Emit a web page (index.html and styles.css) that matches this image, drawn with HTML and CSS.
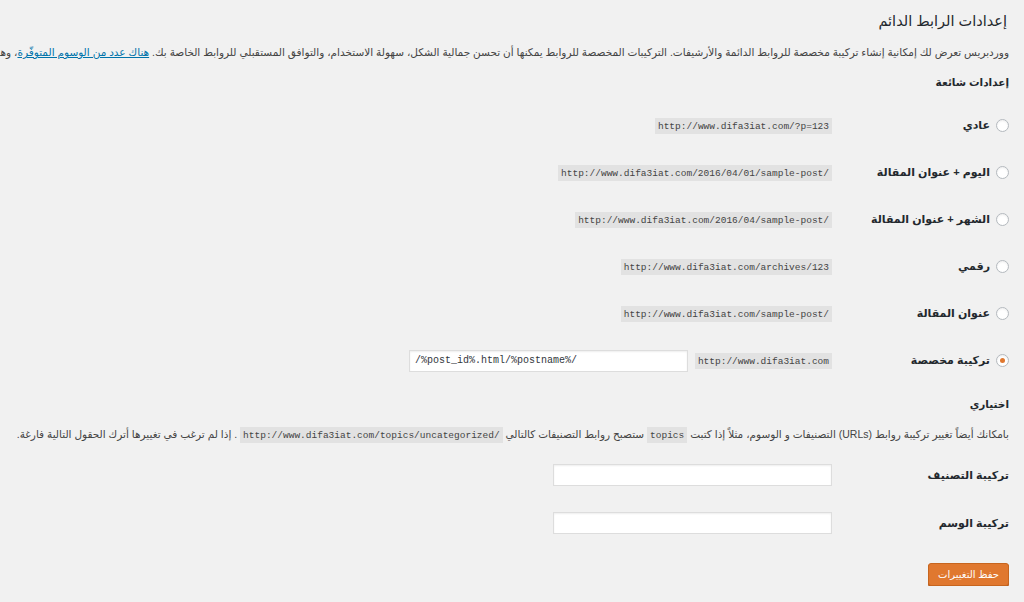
FILE: index.html
```html
<!DOCTYPE html>
<html lang="ar" dir="rtl">
<head>
    <meta charset="UTF-8">
    <title>إعدادات الرابط الدائم</title>
    <link rel="stylesheet" href="styles.css">
</head>
<body>
    <div class="wrap">
        <h1>إعدادات الرابط الدائم</h1>
        <p class="intro">ووردبريس تعرض لك إمكانية إنشاء تركيبة مخصصة للروابط الدائمة والأرشيفات. التركيبات المخصصة للروابط يمكنها أن تحسن جمالية الشكل، سهولة الاستخدام، والتوافق المستقبلي للروابط الخاصة بك. <a href="#">هناك عدد من الوسوم المتوفّرة</a>، وهنا بعض الأمثلة للبدء.</p>

        <h2 class="title">إعدادات شائعة</h2>
        <div class="options">
            <div class="row">
                <label class="choice"><span class="radio"></span>عادي</label>
                <code>http://www.difa3iat.com/?p=123</code>
            </div>
            <div class="row">
                <label class="choice"><span class="radio"></span>اليوم + عنوان المقالة</label>
                <code>http://www.difa3iat.com/2016/04/01/sample-post/</code>
            </div>
            <div class="row">
                <label class="choice"><span class="radio"></span>الشهر + عنوان المقالة</label>
                <code>http://www.difa3iat.com/2016/04/sample-post/</code>
            </div>
            <div class="row">
                <label class="choice"><span class="radio"></span>رقمي</label>
                <code>http://www.difa3iat.com/archives/123</code>
            </div>
            <div class="row">
                <label class="choice"><span class="radio"></span>عنوان المقالة</label>
                <code>http://www.difa3iat.com/sample-post/</code>
            </div>
            <div class="row">
                <label class="choice"><span class="radio checked"></span>تركيبة مخصصة</label>
                <code>http://www.difa3iat.com</code>
                <input class="text wide" type="text" value="/%post_id%.html/%postname%/" dir="ltr">
            </div>
        </div>

        <h2 class="title optional">اختياري</h2>
        <p class="note">بامكانك أيضاً تغيير تركيبة روابط (URLs) التصنيفات و الوسوم، مثلاً إذا كتبت <code>topics</code> ستصبح روابط التصنيفات كالتالي <code>http://www.difa3iat.com/topics/uncategorized/</code> . إذا لم ترغب في تغييرها أترك الحقول التالية فارغة.</p>

        <div class="options fields">
            <div class="row">
                <label class="choice">تركيبة التصنيف</label>
                <input class="text" type="text">
            </div>
            <div class="row">
                <label class="choice">تركيبة الوسم</label>
                <input class="text" type="text">
            </div>
        </div>

        <p class="submit"><button type="button" class="button-primary">حفظ التغييرات</button></p>
    </div>
</body>
</html>
```

FILE: styles.css
```css
html, body {
    margin: 0;
    padding: 0;
    overflow: hidden;
}
body {
    background-color: #f1f1f1;
    color: #444;
    font-family: "Liberation Sans", "DejaVu Sans", sans-serif;
    font-size: 10.5px;
}
.wrap {
    padding: 0 15px 0 0;
    overflow: hidden;
}
h1 {
    font-size: 14.5px;
    font-weight: 400;
    color: #23282d;
    margin: 0;
    padding: 11px 2px 0 0;
    line-height: 20px;
}
.intro {
    white-space: nowrap;
    margin: 13px 0 0 0;
    line-height: 16px;
}
.intro a {
    color: #0073aa;
}
.title {
    font-size: 10.5px;
    font-weight: 700;
    color: #23282d;
    margin: 14px 0 0 0;
    line-height: 16px;
}
.options {
    margin-top: 12px;
}
.row {
    display: flex;
    align-items: center;
    height: 47px;
}
.choice {
    width: 160px;
    flex: none;
    display: flex;
    align-items: center;
    gap: 6px;
    font-size: 11px;
    font-weight: 700;
    color: #23282d;
}
.radio {
    width: 11px;
    height: 11px;
    border: 1px solid #b4b9be;
    border-radius: 50%;
    background: #fff;
    box-shadow: inset 0 1px 2px rgba(0,0,0,.07);
    display: flex;
    align-items: center;
    justify-content: center;
}
.radio.checked::after {
    content: "";
    width: 5px;
    height: 5px;
    border-radius: 50%;
    background: #e0782f;
}
code {
    font-family: "Liberation Mono", "DejaVu Sans Mono", monospace;
    font-size: 9.5px;
    background: #e2e2e2;
    color: #444;
    padding: 3px 3px 2px;
    direction: ltr;
    unicode-bidi: embed;
}
.options code {
    margin-right: 17px;
}
.text {
    width: 279px;
    height: 22px;
    box-sizing: border-box;
    border: 1px solid #ddd;
    background: #fff;
    box-shadow: inset 0 1px 2px rgba(0,0,0,.07);
    font-family: "Liberation Mono", "DejaVu Sans Mono", monospace;
    font-size: 10px;
    color: #32373c;
    padding: 2px 5px;
    margin: 0 17px 0 0;
}
.text.wide {
    margin-right: 7px;
}
.optional {
    margin-top: 12px;
}
.note {
    white-space: nowrap;
    margin: 14px 0 0 0;
    line-height: 16px;
}
.fields {
    margin-top: 7px;
}
.fields .row {
    height: 48px;
}
.submit {
    margin: 16px 0 0 0;
}
.button-primary {
    background: #e0782f;
    border: 1px solid #c7651e;
    border-radius: 3px;
    box-shadow: 0 1px 0 #b05618;
    color: #fff;
    font-family: "Liberation Sans", "DejaVu Sans", sans-serif;
    font-size: 10px;
    height: 23px;
    padding: 0 9px;
    cursor: pointer;
}
```
